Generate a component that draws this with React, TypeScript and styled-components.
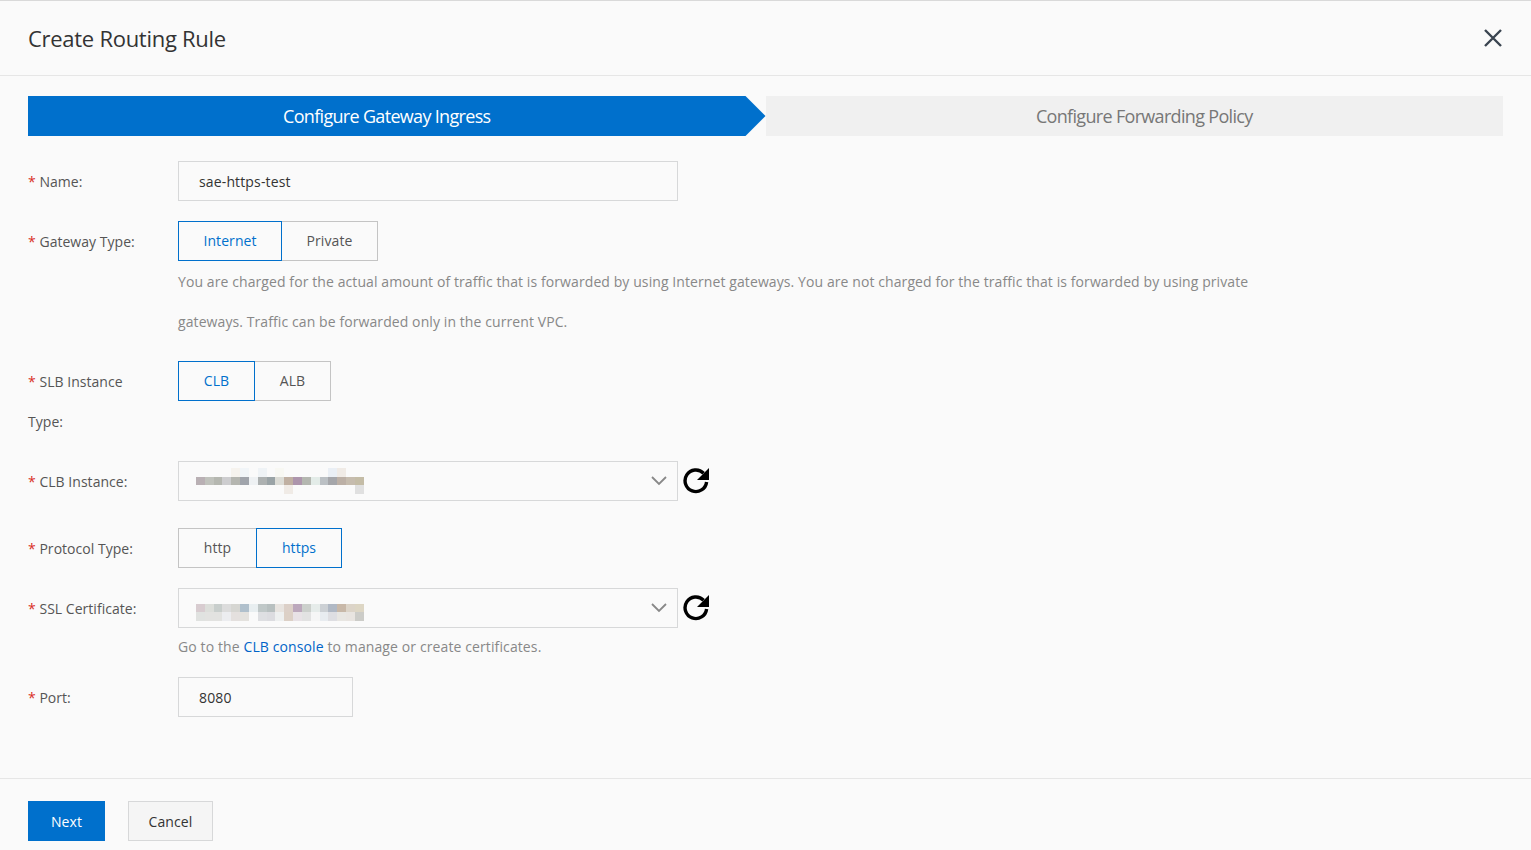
import styled, { createGlobalStyle } from "styled-components";

const GlobalStyle = createGlobalStyle`
  html, body {
    margin: 0;
    padding: 0;
    background: #fafafa;
  }
  * {
    box-sizing: border-box;
  }
`;

const emptyRow = Array(19).fill(null);

const mosaicTop = [
  [null, null, null, null, "#f6f3ee", "#f1f5f8", null, "#eff3f6", null, "#f8f8f3", null, null, null, null, null, "#eaeff5", "#f0ebe6", null, null],
  ["#b9b0b4", "#c0c2bc", "#b5b7b0", "#cdcdcf", "#b5b6b0", "#a0a4ab", "#eef1f3", "#adb1b1", "#9aa3a6", "#dcdcd6", "#c0b0a2", "#ad95ac", "#b4b7b0", "#e3ece8", "#bbc0c4", "#a5a6aa", "#bcb0a6", "#c6bcae", "#c4bca6"],
  [null, null, null, null, null, null, null, null, null, null, "#f0ebe6", null, null, null, null, null, null, null, "#e0e0e0"],
];

const mosaicBottom = [
  emptyRow,
  ["#d8ccd0", "#dcdeda", "#c8cecc", "#dcdcdc", "#d6d6d2", "#b0c0cc", "#e8eef0", "#c0c8c8", "#b8c0c0", "#e8e4e0", "#dcd0c8", "#bca8bc", "#ccd0cc", "#e6ecea", "#ccd0d4", "#b0b8c4", "#c8b8a8", "#dcd4c8", "#ddd6c4"],
  ["#e0e2e0", "#e2e2e0", "#e2e2e0", "#ecedf0", "#e4e0de", "#e4e2de", "#fafafa", "#dedfe2", "#dcdce0", "#eef0f0", "#dcd0c6", "#e8e2e6", "#e2e2e2", "#f6f6f6", "#e8ecf0", "#dedee2", "#e8e6e2", "#e8e4e0", "#ccccc8"],
];

function RefreshIcon() {
  return (
    <RefreshSvg viewBox="0 0 26 27" width="26" height="27">
      <path d="M20.6 6.2A10.8 10.8 0 1 0 23.6 15" fill="none" stroke="#000" strokeWidth="3.4" />
      <path d="M26 1v12H14z" fill="#000" />
    </RefreshSvg>
  );
}

function Chevron() {
  return (
    <ChevronSvg viewBox="0 0 16 10" width="16" height="10">
      <path d="M1 1l7 7 7-7" fill="none" stroke="#888" strokeWidth="1.8" />
    </ChevronSvg>
  );
}

function Blurred({ rows }: { rows: (string | null)[][] }) {
  return (
    <Mosaic>
      {rows.map((row, r) =>
        row.map((c, i) => <MosaicCell key={`${r}-${i}`} style={{ background: c ?? "transparent" }} />)
      )}
    </Mosaic>
  );
}

function Label({ text }: { text: string }) {
  return (
    <FieldLabel>
      <Star>*</Star> {text}
    </FieldLabel>
  );
}

export default function App() {
  return (
    <Page>
      <GlobalStyle />
      <Header>
        <Title>Create Routing Rule</Title>
        <CloseSvg viewBox="0 0 18 18" width="18" height="18">
          <path d="M1 1l16 16M17 1L1 17" fill="none" stroke="#3a4450" strokeWidth="2.4" />
        </CloseSvg>
      </Header>

      <Body>
        <Steps>
          <ActiveStep>Configure Gateway Ingress</ActiveStep>
          <NextStep>Configure Forwarding Policy</NextStep>
        </Steps>

        <Form>
          <Row>
            <Label text="Name:" />
            <TextInput $width={500} defaultValue="sae-https-test" readOnly />
          </Row>

          <Row>
            <Label text="Gateway Type:" />
            <Field>
              <Segments>
                <Segment $active $width={104}>Internet</Segment>
                <Segment $width={97}>Private</Segment>
              </Segments>
              <HelpBlock>
                You are charged for the actual amount of traffic that is forwarded by using Internet gateways. You are not
                charged for the traffic that is forwarded by using private gateways. Traffic can be forwarded only in the
                current VPC.
              </HelpBlock>
            </Field>
          </Row>

          <Row>
            <Label text="SLB Instance Type:" />
            <Segments>
              <Segment $active $width={77}>CLB</Segment>
              <Segment $width={77}>ALB</Segment>
            </Segments>
          </Row>

          <Row $after={7}>
            <Label text="CLB Instance:" />
            <SelectWrap>
              <Select>
                <Blurred rows={mosaicTop} />
                <Chevron />
              </Select>
              <RefreshIcon />
            </SelectWrap>
          </Row>

          <Row>
            <Label text="Protocol Type:" />
            <Segments>
              <Segment $width={79}>http</Segment>
              <Segment $active $width={86}>https</Segment>
            </Segments>
          </Row>

          <Row>
            <Label text="SSL Certificate:" />
            <Field>
              <SelectWrap>
                <Select>
                  <Blurred rows={mosaicBottom} />
                  <Chevron />
                </Select>
                <RefreshIcon />
              </SelectWrap>
              <Note>
                Go to the <NoteLink href="#">CLB console</NoteLink> to manage or create certificates.
              </Note>
            </Field>
          </Row>

          <Row>
            <Label text="Port:" />
            <TextInput $width={175} defaultValue="8080" readOnly />
          </Row>
        </Form>
      </Body>

      <Footer>
        <PrimaryButton>Next</PrimaryButton>
        <SecondaryButton>Cancel</SecondaryButton>
      </Footer>
    </Page>
  );
}

const Page = styled.div`
  width: 1531px;
  height: 850px;
  overflow: hidden;
  display: flex;
  flex-direction: column;
  background: #fafafa;
  border-top: 1px solid #d9d9d9;
  font-family: "Open Sans", "Noto Sans", sans-serif;
  font-size: 14px;
  letter-spacing: 0.08px;
  color: #333;
`;

const Header = styled.header`
  height: 75px;
  flex: none;
  display: flex;
  align-items: center;
  justify-content: space-between;
  padding: 0 29px 0 28px;
  border-bottom: 1px solid #e6e6e6;
`;

const Title = styled.h2`
  margin: 0;
  font-size: 22px;
  font-weight: 400;
  letter-spacing: -0.28px;
  color: #333;
`;

const CloseSvg = styled.svg`
  display: block;
`;

const Body = styled.main`
  flex: 1;
  padding: 20px 28px 0;
`;

const Steps = styled.div`
  display: flex;
  height: 40px;
  font-size: 18px;
  letter-spacing: -0.68px;
`;

const ActiveStep = styled.div`
  flex: 1;
  display: flex;
  align-items: center;
  justify-content: center;
  padding-right: 20px;
  color: #fff;
  background: #0070cc;
  clip-path: polygon(0 0, calc(100% - 20px) 0, 100% 50%, calc(100% - 20px) 100%, 0 100%);
`;

const NextStep = styled.div`
  flex: 1;
  display: flex;
  align-items: center;
  justify-content: center;
  padding-left: 20px;
  color: #777;
  background: #f0f0f0;
`;

const Form = styled.form`
  margin-top: 25px;
  display: flex;
  flex-direction: column;
`;

const Row = styled.div<{ $after?: number }>`
  display: grid;
  grid-template-columns: 150px 1fr;
  margin-bottom: ${(p) => 20 + (p.$after ?? 0)}px;
`;

const FieldLabel = styled.label`
  max-width: 118px;
  padding-top: 1px;
  margin-bottom: -1px;
  line-height: 40px;
  letter-spacing: 0.03px;
  color: #555;
`;

const Star = styled.span`
  color: #d93026;
`;

const Field = styled.div`
  display: flex;
  flex-direction: column;
`;

const TextInput = styled.input<{ $width: number }>`
  width: ${(p) => p.$width}px;
  height: 40px;
  padding: 0 20px;
  border: 1px solid #d7d8d9;
  border-radius: 0;
  outline: none;
  background: transparent;
  font: inherit;
  letter-spacing: 0.14px;
  color: #333;
`;

const Segments = styled.div`
  display: flex;
`;

const Segment = styled.button<{ $active?: boolean; $width: number }>`
  position: relative;
  z-index: ${(p) => (p.$active ? 1 : 0)};
  width: ${(p) => p.$width}px;
  height: 40px;
  padding: 0 0 2px;
  margin-right: -1px;
  border: 1px solid ${(p) => (p.$active ? "#0070cc" : "#c4c4c4")};
  background: transparent;
  font: inherit;
  letter-spacing: inherit;
  color: ${(p) => (p.$active ? "#0070cc" : "#555")};
`;

const HelpBlock = styled.p`
  margin: 0 0 -1px;
  max-width: 1075px;
  line-height: 40px;
  padding-top: 1px;
  letter-spacing: 0.09px;
  color: #888;
`;

const SelectWrap = styled.div`
  display: flex;
  align-items: flex-start;
  gap: 5px;
`;

const Select = styled.div`
  position: relative;
  width: 500px;
  height: 40px;
  display: flex;
  align-items: center;
  justify-content: space-between;
  padding: 0 10px 0 17px;
  border: 1px solid #d7d8d9;
`;

const Mosaic = styled.div`
  display: grid;
  grid-template-columns: repeat(19, 8.84px);
  grid-auto-rows: 8.6px;
`;

const MosaicCell = styled.span`
  display: block;
`;

const ChevronSvg = styled.svg`
  display: block;
`;

const RefreshSvg = styled.svg`
  display: block;
  margin-top: 6px;
`;

const Note = styled.div`
  padding-top: 9px;
  line-height: 20px;
  letter-spacing: 0.11px;
  color: #888;
`;

const NoteLink = styled.a`
  color: #0064c8;
  text-decoration: none;
`;

const Footer = styled.footer`
  flex: none;
  height: 72px;
  padding-top: 22px;
  display: flex;
  gap: 23px;
  border-top: 1px solid #e6e6e6;
`;

const PrimaryButton = styled.button`
  width: 77px;
  height: 40px;
  margin-left: 28px;
  border: none;
  background: #0070cc;
  color: #fff;
  font: inherit;
  letter-spacing: inherit;
`;

const SecondaryButton = styled.button`
  width: 85px;
  height: 40px;
  border: 1px solid #d7d8d9;
  background: #f5f5f5;
  color: #333;
  font: inherit;
  letter-spacing: inherit;
`;
